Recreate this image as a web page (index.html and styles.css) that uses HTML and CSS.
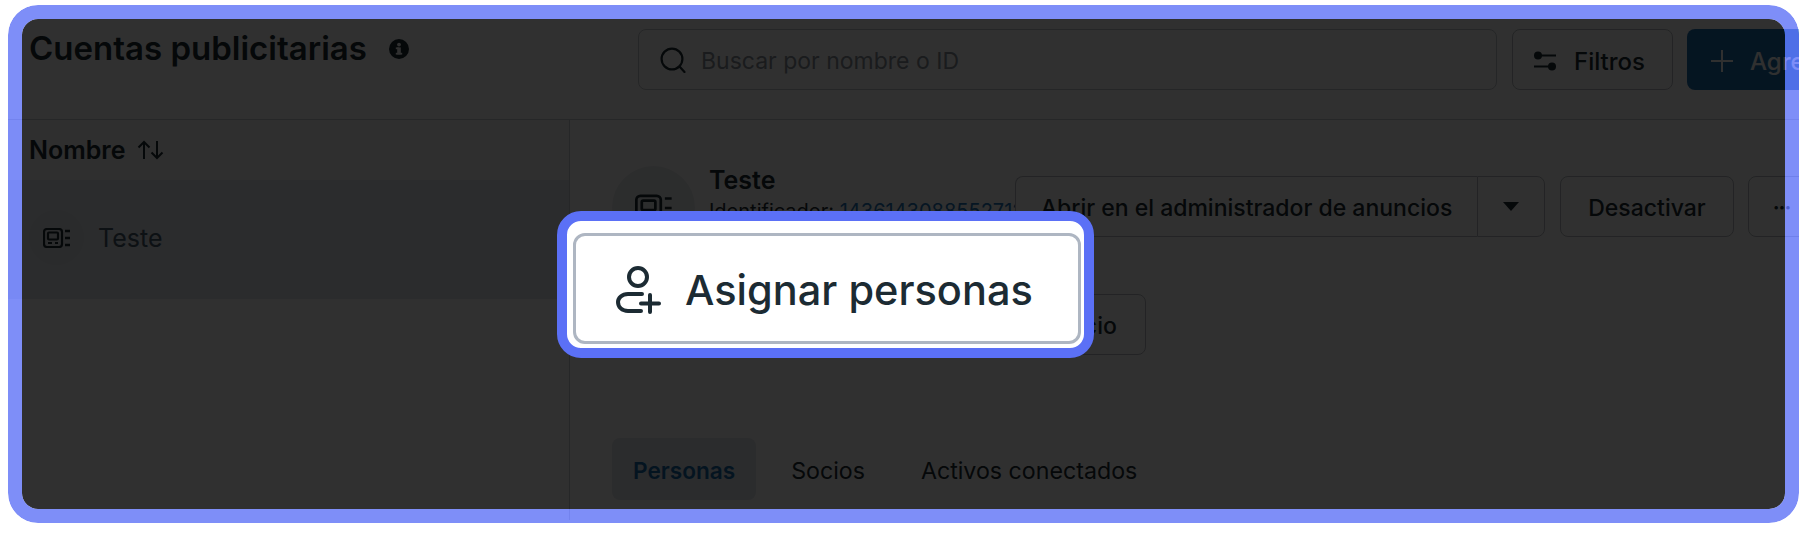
FILE: index.html
```html
<!DOCTYPE html>
<html>
<head>
    <title>Cuentas publicitarias</title>
    <link rel="stylesheet" href="styles.css">
</head>
<body>
    <div class="page">
        <div class="topbar">
            <div class="title-wrap">
                <h1>Cuentas publicitarias</h1>
                <svg class="info-icon" width="20" height="20" viewBox="0 0 20 20"><circle cx="10" cy="10" r="10" fill="#1c2b33"/><rect x="8.2" y="8.4" width="3.6" height="7" fill="#fff"/><rect x="6.8" y="8.4" width="3" height="1.8" fill="#fff"/><rect x="6.8" y="13.8" width="6.4" height="1.8" fill="#fff"/><circle cx="10" cy="5.6" r="1.9" fill="#fff"/></svg>
            </div>
            <div class="search">
                <svg width="26" height="26" viewBox="0 0 26 26" fill="none" stroke="#1c2b33" stroke-width="2.2"><circle cx="12" cy="12" r="10.4"/><path d="M19.5 19.5 L24.5 25" stroke-linecap="round"/></svg>
                <span>Buscar por nombre o ID</span>
            </div>
            <button class="btn filter-btn">
                <svg width="24" height="20" viewBox="0 0 24 20" fill="none" stroke="#1c2b33" stroke-width="2.2"><path d="M5 4.5H23M1 15.5H19"/><circle cx="5" cy="4.5" r="4" fill="#1c2b33" stroke="none"/><circle cx="19" cy="15.5" r="4" fill="#1c2b33" stroke="none"/></svg>
                Filtros
            </button>
            <button class="btn primary-btn">
                <svg width="22" height="22" viewBox="0 0 22 22" stroke="#fff" stroke-width="2"><path d="M11 0V22M0 11H22"/></svg>
                Agregar
            </button>
        </div>

        <div class="main">
            <div class="sidebar">
                <div class="list-head">
                    Nombre
                    <svg width="27" height="20" viewBox="0 0 27 20" fill="none" stroke="#1c2b33" stroke-width="2"><path d="M7 19V2M1.5 7.5L7 2L12.5 7.5M20 1V18M14.5 12.5L20 18L25.5 12.5"/></svg>
                </div>
                <div class="list-row">
                    <div class="row-icon">
                        <svg width="28" height="20" viewBox="0 0 28 20" fill="none" stroke="#1c2b33" stroke-width="2.2"><rect x="1" y="1" width="18" height="18" rx="3"/><rect x="5" y="4.5" width="10" height="7" rx="1"/><path d="M5 15H9M12 15H15"/><path d="M22 3H27M22 10H27M22 17H27" stroke-width="2.6"/></svg>
                    </div>
                    <span>Teste</span>
                </div>
            </div>

            <div class="detail">
                <div class="detail-head">
                    <div class="avatar">
                        <svg width="38" height="28" viewBox="0 0 28 20" fill="none" stroke="#1c2b33" stroke-width="2"><rect x="1" y="1" width="18" height="18" rx="3"/><rect x="5" y="4.5" width="10" height="7" rx="1"/><path d="M5 15H9M12 15H15M22 3H27M22 10H27M22 17H27"/></svg>
                    </div>
                    <div class="account-info">
                        <div class="account-name">Teste</div>
                        <div class="account-id">Identificador: <a>14361430885527127</a></div>
                    </div>
                    <div class="btn-group">
                        <button class="btn group-main">Abrir en el administrador de anuncios</button>
                        <button class="btn group-caret"><span class="caret"></span></button>
                    </div>
                    <button class="btn off-btn">Desactivar</button>
                    <button class="btn more-btn"><span class="dots">•••</span></button>
                </div>

                <div class="actions">
                    <button class="btn assign-ghost">Asignar personas</button>
                    <button class="btn">Asignar socio</button>
                </div>

                <div class="tabs">
                    <div class="tab active">Personas</div>
                    <div class="tab">Socios</div>
                    <div class="tab">Activos conectados</div>
                </div>
            </div>
        </div>

        <div class="scrim"></div>
        <div class="frame"></div>

        <div class="highlight">
            <div class="highlight-btn">
                <svg width="46" height="48" viewBox="0 0 46 48" fill="none" stroke="#1c2b33" stroke-width="4" stroke-linecap="round"><circle cx="23" cy="11" r="9"/><path d="M27 28H13C7 28 3 32 3 36C3 41 7 45 13 45H26M35 29V46M26 37.5H44"/></svg>
                <span>Asignar personas</span>
            </div>
        </div>
    </div>
</body>
</html>
```

FILE: styles.css
```css
* {
    box-sizing: border-box;
}
body {
    margin: 0;
    padding: 5px 15px 11px 8px;
    background: white;
    font-family: Inter, "Noto Sans", sans-serif;
    color: #1c2b33;
}
.page {
    position: relative;
    width: 1791px;
    height: 518px;
    border-radius: 30px;
    overflow: hidden;
    background: white;
}
.scrim {
    position: absolute;
    inset: 14px;
    border-radius: 16px;
    background: rgba(0,0,0,0.81);
}
.frame {
    position: absolute;
    inset: 0;
    border: 14px solid rgba(91,112,246,0.79);
    border-radius: 30px;
}

.topbar {
    display: flex;
    align-items: flex-start;
    height: 115px;
    padding: 24px 0 0 21px;
    border-bottom: 1px solid #c9ccd1;
}
.title-wrap {
    display: flex;
    align-items: center;
    gap: 22px;
    width: 609px;
    height: 40px;
    flex-shrink: 0;
}
h1 {
    margin: 0 0 2px;
    font-size: 33px;
    font-weight: 600;
    white-space: nowrap;
}
.search {
    display: flex;
    align-items: center;
    gap: 15px;
    width: 859px;
    height: 61px;
    padding: 2px 0 0 21px;
    border: 1.5px solid #c4c7cc;
    border-radius: 8px;
    font-size: 23px;
    color: #8a9299;
    flex-shrink: 0;
}
.search svg {
    margin-top: -2px;
}
.btn {
    display: flex;
    align-items: center;
    justify-content: center;
    height: 61px;
    padding: 3px 28px 0;
    border: 1.5px solid #b8bcc2;
    border-radius: 8px;
    background: white;
    font-family: inherit;
    font-size: 23px;
    font-weight: 500;
    color: #1c2b33;
    white-space: nowrap;
    flex-shrink: 0;
}
.filter-btn {
    justify-content: flex-start;
    width: 161px;
    gap: 17px;
    margin-left: 15px;
    padding: 3px 0 0 20px;
    font-size: 24px;
}
.primary-btn {
    justify-content: flex-start;
    gap: 17px;
    width: 220px;
    margin-left: 14px;
    padding: 3px 0 0 24px;
    border: none;
    background: #1f6fb0;
    color: white;
    font-size: 24px;
}

.main {
    display: flex;
    height: 400px;
}
.sidebar {
    width: 562px;
    border-right: 1px solid #c9ccd1;
    flex-shrink: 0;
}
.list-head {
    display: flex;
    align-items: center;
    gap: 12px;
    height: 60px;
    padding-left: 21px;
    font-size: 25px;
    font-weight: 600;
    background: #f6f6f7;
}
.list-row {
    display: flex;
    align-items: center;
    gap: 14px;
    height: 119px;
    padding: 0 0 4px 21px;
    font-size: 25px;
    color: #465a69;
    background: #e4e8ef;
}
.row-icon {
    display: flex;
    align-items: center;
    justify-content: center;
    width: 55px;
    height: 55px;
    border-radius: 50%;
    background: #dee1e6;
}

.detail {
    flex: 1;
    min-width: 0;
    padding: 46px 0 0 42px;
}
.detail-head {
    display: flex;
    align-items: flex-start;
    height: 83px;
}
.avatar {
    display: flex;
    align-items: center;
    justify-content: center;
    width: 83px;
    height: 83px;
    margin-right: 14px;
    border-radius: 50%;
    background: #ebedf0;
    flex-shrink: 0;
}
.account-info {
    width: 306px;
    overflow: hidden;
    white-space: nowrap;
    flex-shrink: 0;
}
.account-name {
    font-size: 25px;
    font-weight: 600;
    line-height: 28px;
}
.account-id {
    margin-top: 5px;
    font-size: 20px;
    line-height: 24px;
}
.account-id a {
    color: #2374b8;
}
.btn-group {
    display: flex;
    margin-top: 10px;
    flex-shrink: 0;
}
.group-main {
    width: 462px;
    border-radius: 8px 0 0 8px;
    border-right: none;
    padding: 3px 0 0;
}
.group-caret {
    width: 68px;
    padding: 0;
    border-radius: 0 8px 8px 0;
}
.caret {
    border-left: 8px solid transparent;
    border-right: 8px solid transparent;
    border-top: 9px solid #1c2b33;
}
.off-btn {
    width: 174px;
    margin: 10px 0 0 15px;
    padding: 3px 0 0;
}
.more-btn {
    width: 68px;
    margin: 10px 0 0 14px;
    padding: 0;
}
.dots {
    font-size: 11px;
}

.actions {
    display: flex;
    gap: 14px;
    margin-top: 45px;
}
.assign-ghost {
    width: 312px;
}
.tabs {
    display: flex;
    gap: 14px;
    margin-top: 83px;
}
.tab {
    display: flex;
    align-items: center;
    height: 62px;
    padding: 3px 21px 0;
    border-radius: 8px;
    font-size: 23.2px;
    color: #1c2b33;
}
.tab.active {
    background: #e4e7ec;
    color: #1a6cab;
    font-size: 22.6px;
    font-weight: 600;
}

.highlight {
    position: absolute;
    left: 549px;
    top: 206px;
    width: 537px;
    height: 147px;
    padding: 12px 3px 4px 6px;
    border: 10px solid #5b70f6;
    border-radius: 24px;
    background: white;
}
.highlight-btn {
    display: flex;
    align-items: center;
    gap: 24px;
    height: 100%;
    padding: 2px 0 0 39px;
    border: 3px solid #aeb6c2;
    border-radius: 12px;
    font-size: 41.5px;
    font-weight: 500;
    color: #1c2b33;
    white-space: nowrap;
}
```
